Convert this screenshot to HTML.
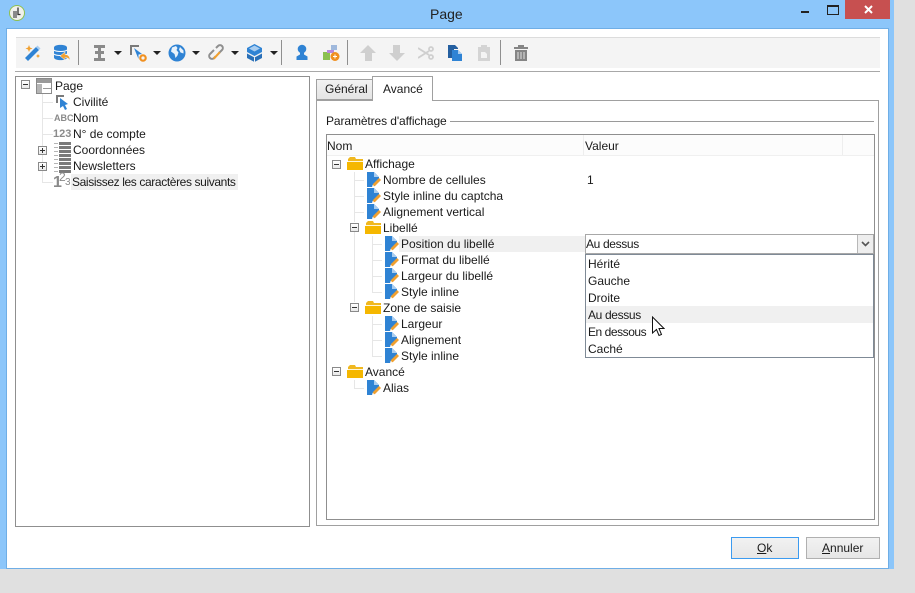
<!DOCTYPE html>
<html lang="fr"><head><meta charset="utf-8"><title>Page</title>
<style>
html,body{margin:0;padding:0}
body{width:915px;height:593px;overflow:hidden;position:relative;background:#e0e0e0;font:12px/16px "Liberation Sans",sans-serif;color:#1a1a1a}
div,span.t,svg.a{position:absolute}
.t{position:absolute;white-space:nowrap;height:16px;line-height:16px}
.box{box-sizing:border-box;background:#fff}
.pm{position:absolute;width:9px;height:9px;box-sizing:border-box;border:1px solid #8a8a8a;background:linear-gradient(#fff,#e8e8e8)}
.pm:before{content:"";position:absolute;left:1px;top:3px;width:5px;height:1px;background:#333}
.pm.p:after{content:"";position:absolute;left:3px;top:1px;width:1px;height:5px;background:#333}
.h{background:#e6e6e6;height:1px}
.v{background:#e6e6e6;width:1px}
.sep{width:1px;height:25px;top:40px;background:#8f8f8f}
.tri{width:0;height:0;border-left:4px solid transparent;border-right:4px solid transparent;border-top:4px solid #222;top:51px}
u{text-decoration:underline}
</style></head><body>
<svg width="0" height="0" style="position:absolute"><defs>
<symbol id="doc" viewBox="0 0 16 16"><path d="M1 0h7l5 5v3l-7 7H1z" fill="#2f83d4"/><path d="M8 0l5 5H8z" fill="#a9cdf0"/><path d="M6 15l1-3 6-6 2 2-6 6z" fill="#f0a030"/><path d="M6 15l.7-2.300 1.600 1.600z" fill="#fff"/></symbol>
<symbol id="fold" viewBox="0 0 16 14"><path d="M3 0h5l1 2h7v2H1V2z" fill="#f0b820"/><path d="M1 4h15v1H1z" fill="#fff6d8"/><path d="M0 5h16v8H0z" fill="#f5b700"/></symbol>
<symbol id="list" viewBox="0 0 17 18"><g fill="#7a7a7a"><rect x="5" y="1" width="12" height="3"/><rect x="5" y="5" width="12" height="3"/><rect x="5" y="9" width="12" height="3"/><rect x="5" y="13" width="12" height="3"/></g><g fill="#b5b5b5"><rect x="0" y="2" width="4" height="1"/><rect x="0" y="6" width="4" height="1"/><rect x="0" y="10" width="4" height="1"/><rect x="0" y="14" width="4" height="1"/></g></symbol>
</defs></svg>

<!-- window -->
<div style="left:0;top:0;width:894px;height:569px;background:#8cc6fa"></div>
<div style="left:6px;top:28px;width:883px;height:541px;box-sizing:border-box;border:1px solid #6faee6;background:#fff"></div>

<!-- title -->
<svg class="a" style="left:8px;top:4px" width="18" height="18" viewBox="0 0 18 18"><circle cx="9" cy="9" r="7.500" fill="#f0f0ec" stroke="#8fc050"/><path d="M5 7h4v7H5z" fill="#8a8a8a"/><path d="M10 3.500v7h2.500" fill="none" stroke="#333" stroke-width="1.300"/></svg>
<span class="t" style="left:430px;top:6px;font-size:14px;color:#222">Page</span>
<div style="left:801px;top:11px;width:8px;height:2px;background:#222"></div>
<div style="left:827px;top:5px;width:10px;height:7px;border:1px solid #222;border-top-width:2px;box-sizing:content-box"></div>
<div style="left:845px;top:0;width:45px;height:19px;background:#c75050"></div>
<svg class="a" style="left:864px;top:5px" width="9" height="9" viewBox="0 0 9 9"><path d="M1 1l7 7M8 1L1 8" stroke="#fff" stroke-width="2"/></svg>

<!-- toolbar -->
<div style="left:16px;top:37px;width:864px;height:30px;background:#f4f4f4;border-top:1px solid #dcdcdc"></div>
<div style="left:15px;top:71px;width:865px;height:1px;background:#a8a8a8"></div>

<svg class="a" style="left:24px;top:44px" width="18" height="18" viewBox="0 0 18 18"><path d="M1 14L12 3l3 3L4 17z" fill="#2f83d4"/><path d="M12 3l1.500-1.500 3 3L15 6z" fill="#a9cdf0"/><path d="M5 1l1 2.500 2.500 1-2.500 1L5 8 4 5.500l-2.500-1 2.500-1zM14 10l.7 1.300 1.300.7-1.300.7-.7 1.300-.7-1.300-1.300-.7 1.300-.7z" fill="#f0a030"/></svg>
<svg class="a" style="left:53px;top:44px" width="18" height="18" viewBox="0 0 18 18"><path d="M1 3.500c0-3.500 13-3.500 13 0v10c0 3.500-13 3.500-13 0z" fill="#2f83d4"/><path d="M1 6c2 2 11 2 13 0M1 10c2 2 11 2 13 0" stroke="#fff" fill="none"/><path d="M7 12l5-4v2.500c3 0 5 2 5 6-1-2-3-3-5-3V16z" fill="#f0a030" stroke="#f4f4f4" stroke-width=".5"/></svg>
<div class="sep" style="left:78px"></div>
<svg class="a" style="left:93px;top:45px" width="13" height="16" viewBox="0 0 13 16"><path d="M1 0h11v3H8v3h3v3H8v4h4v3H1v-3h4V9H2V6h3V3H1z" fill="#8a8a8a"/></svg>
<div class="tri" style="left:114px"></div>
<svg class="a" style="left:130px;top:44px" width="17" height="19" viewBox="0 0 17 19"><path d="M0 1h9v2H2v8H0z" fill="#7a7a7a"/><path d="M4 4l8 6-3.500.5V15z" fill="#2f83d4"/><circle cx="13" cy="14" r="2.700" fill="none" stroke="#f09020" stroke-width="2.200"/></svg>
<div class="tri" style="left:153px"></div>
<svg class="a" style="left:168px;top:44px" width="18" height="18" viewBox="0 0 18 18"><circle cx="9" cy="9" r="8.500" fill="#2f83d4"/><path d="M4 3.500l4-1.500 1.500 2-1 2 2 2.500-1 3-2 2.500-1-4-3.500-2.500zM12 3l3.500 3.500v3l-3-1-1.500-3z" fill="#e8f2fb"/></svg>
<div class="tri" style="left:192px"></div>
<svg class="a" style="left:207px;top:44px" width="18" height="18" viewBox="0 0 18 18"><g fill="none" stroke="#8f8f8f" stroke-width="2"><path d="M7 6L3 10a2.800 2.800 0 0 0 4 4l1.500-1.500"/><path d="M9 4l2-2a2.800 2.800 0 0 1 4 4l-3 3"/></g><path d="M6 14l6-6.500 1.500 1.500L7.500 15.500z" fill="#f0a030"/></svg>
<div class="tri" style="left:231px"></div>
<svg class="a" style="left:246px;top:44px" width="17" height="18" viewBox="0 0 17 18"><path d="M8.500 0L16 4v4l-7.500 4L1 8V4z" fill="#2f83d4"/><path d="M3 4.500l5.500-3 5.500 3-5.500 3z" fill="#a9cdf0"/><path d="M1 9.500l7.500 4 7.500-4V14l-7.500 4L1 14z" fill="#2a70b8"/><path d="M8 13.500h1V18H8z" fill="#f4f4f4"/></svg>
<div class="tri" style="left:270px"></div>
<div class="sep" style="left:281px"></div>
<svg class="a" style="left:295px;top:44px" width="14" height="17" viewBox="0 0 14 17"><circle cx="7" cy="5" r="4.300" fill="#2f83d4"/><path d="M5 8h4v2.500l3.500 2V16h-11v-3.500l3.500-2z" fill="#2f83d4"/></svg>
<svg class="a" style="left:322px;top:44px" width="18" height="18" viewBox="0 0 18 18"><rect x="1" y="8" width="7" height="8" fill="#8cc050"/><rect x="9" y="1" width="6" height="5" fill="#9fb8dc"/><path d="M5 6h7v3H5z" fill="#b888dc"/><circle cx="13" cy="12.500" r="4.500" fill="#f09020"/><path d="M11 12.500h4M13 10.500v4" stroke="#fff"/></svg>
<div class="sep" style="left:347px"></div>
<svg class="a" style="left:360px;top:45px" width="16" height="16" viewBox="0 0 16 16"><path d="M8 0l8 8h-4v8H5V8H0z" fill="#cfcfcf"/></svg>
<svg class="a" style="left:389px;top:45px" width="16" height="16" viewBox="0 0 16 16"><path d="M8 16L0 8h4V0h7v8h5z" fill="#cfcfcf"/></svg>
<svg class="a" style="left:418px;top:45px" width="16" height="16" viewBox="0 0 16 16"><g fill="none" stroke="#cfcfcf" stroke-width="1.800"><circle cx="13" cy="4" r="2"/><circle cx="13" cy="12" r="2"/><path d="M0 3l11 7M0 13l11-7"/></g></svg>
<svg class="a" style="left:447px;top:44px" width="16" height="18" viewBox="0 0 16 18"><rect x="1" y="1" width="6" height="13" fill="#245fa0"/><path d="M6 1h2l3 3v1H6z" fill="#245fa0"/><path d="M5 6h6l4 4v7H5z" fill="#2f83d4"/><path d="M11 6l4 4h-4z" fill="#a9cdf0"/></svg>
<svg class="a" style="left:477px;top:45px" width="14" height="16" viewBox="0 0 14 16"><path d="M1 2h3V0h6v2h3v14H1z" fill="#d4d4d4"/><path d="M4 7h4l2 2v4H4z" fill="#f4f4f4"/></svg>
<div class="sep" style="left:500px"></div>
<svg class="a" style="left:514px;top:45px" width="14" height="16" viewBox="0 0 14 16"><path d="M0 2h4V0h6v2h4v2H0zM1 5h12v11H1z" fill="#858585"/><path d="M4 7v7M7 7v7M10 7v7" stroke="#e4e4e4"/></svg>

<!-- left tree -->
<div class="box" style="left:15px;top:76px;width:295px;height:451px;border:1px solid #8f8f8f"></div>
<div class="v" style="left:42px;top:94px;height:88px"></div>
<div class="h" style="left:42px;top:102px;width:11px"></div>
<div class="h" style="left:42px;top:118px;width:11px"></div>
<div class="h" style="left:42px;top:134px;width:11px"></div>
<div class="h" style="left:42px;top:182px;width:11px"></div>
<div class="pm" style="left:21px;top:80px"></div>
<div class="pm p" style="left:38px;top:146px"></div>
<div class="pm p" style="left:38px;top:162px"></div>
<svg class="a" style="left:36px;top:78px" width="16" height="16" viewBox="0 0 16 16"><rect x=".5" y=".5" width="15" height="15" fill="#fff" stroke="#8a8a8a"/><rect x="1" y="1" width="14" height="4" fill="#9a9a9a"/><rect x="1" y="6" width="5" height="9" fill="#b5b5b5"/><rect x="7" y="10" width="8" height="1" fill="#9a9a9a"/></svg>
<span class="t" style="left:55px;top:78px">Page</span>
<svg class="a" style="left:55px;top:94px" width="15" height="16" viewBox="0 0 15 16"><path d="M1 1h8v2H3v6H1z" fill="#7a7a7a"/><path d="M5 4l8 6-3 1 2 4-2 1-2-4-3 2z" fill="#2f83d4"/></svg>
<span class="t" style="left:73px;top:94px">Civilité</span>
<span class="t" style="left:54px;top:110px;font-size:9px;font-weight:bold;color:#8a8a8a">ABC</span>
<span class="t" style="left:73px;top:110px">Nom</span>
<span class="t" style="left:53px;top:126px;font-size:11px;font-weight:bold;color:#8a8a8a">123</span>
<span class="t" style="left:73px;top:126px">N° de compte</span>
<svg class="a" style="left:54px;top:141px" width="17" height="18"><use href="#list"/></svg>
<span class="t" style="left:73px;top:142px">Coordonnées</span>
<svg class="a" style="left:54px;top:157px" width="17" height="18"><use href="#list"/></svg>
<span class="t" style="left:73px;top:158px">Newsletters</span>
<div style="left:71px;top:174px;width:167px;height:16px;background:#f0f0f0"></div>
<span class="t" style="left:53px;top:175px;font-size:16px;font-weight:bold;color:#8a8a8a">1</span>
<span class="t" style="left:59px;top:169px;font-size:12px;color:#8a8a8a">2</span>
<span class="t" style="left:65px;top:175px;font-size:10px;color:#8a8a8a">3</span>
<span class="t" style="left:72px;top:174px;letter-spacing:-.38px">Saisissez les caractères suivants</span>

<!-- tabs -->
<div class="box" style="left:316px;top:100px;width:563px;height:426px;border:1px solid #a0a0a0"></div>
<div style="left:316px;top:79px;width:56px;height:21px;box-sizing:border-box;border:1px solid #a0a0a0;border-right:0;background:linear-gradient(#f2f2f2,#e4e4e4)"></div>
<span class="t" style="left:325px;top:81px">Général</span>
<div style="left:372px;top:76px;width:61px;height:25px;box-sizing:border-box;border:1px solid #a0a0a0;border-bottom:0;background:#fff"></div>
<span class="t" style="left:383px;top:81px">Avancé</span>

<span class="t" style="left:326px;top:113px;letter-spacing:-.1px">Paramètres d'affichage</span>
<div style="left:450px;top:121px;width:424px;height:1px;background:#9a9a9a"></div>

<!-- grid -->
<div class="box" style="left:326px;top:134px;width:549px;height:386px;border:1px solid #8f8f8f"></div>
<div style="left:327px;top:135px;width:547px;height:20px;background:#fcfcfc;border-bottom:1px solid #f0f0f0"></div>
<div style="left:583px;top:135px;width:1px;height:20px;background:#eee"></div>
<div style="left:842px;top:135px;width:1px;height:20px;background:#eee"></div>
<span class="t" style="left:327px;top:138px">Nom</span>
<span class="t" style="left:585px;top:138px">Valeur</span>

<!-- grid tree lines -->
<div class="v" style="left:354px;top:172px;height:50px"></div>
<div class="v" style="left:354px;top:232px;height:70px"></div>
<div class="v" style="left:354px;top:380px;height:8px"></div>
<div class="v" style="left:372px;top:236px;height:56px"></div>
<div class="v" style="left:372px;top:316px;height:40px"></div>
<div class="h" style="left:354px;top:180px;width:10px"></div>
<div class="h" style="left:354px;top:196px;width:10px"></div>
<div class="h" style="left:354px;top:212px;width:10px"></div>
<div class="h" style="left:372px;top:244px;width:10px"></div>
<div class="h" style="left:372px;top:260px;width:10px"></div>
<div class="h" style="left:372px;top:276px;width:10px"></div>
<div class="h" style="left:372px;top:292px;width:10px"></div>
<div class="h" style="left:372px;top:324px;width:10px"></div>
<div class="h" style="left:372px;top:340px;width:10px"></div>
<div class="h" style="left:372px;top:356px;width:10px"></div>
<div class="h" style="left:354px;top:388px;width:10px"></div>

<div class="pm" style="left:332px;top:160px"></div>
<div class="pm" style="left:350px;top:223px"></div>
<div class="pm" style="left:350px;top:303px"></div>
<div class="pm" style="left:332px;top:367px"></div>

<svg class="a" style="left:347px;top:157px" width="16" height="14"><use href="#fold"/></svg>
<span class="t" style="left:365px;top:156px">Affichage</span>
<svg class="a" style="left:366px;top:172px" width="16" height="16"><use href="#doc"/></svg>
<span class="t" style="left:383px;top:172px">Nombre de cellules</span>
<span class="t" style="left:587px;top:172px">1</span>
<svg class="a" style="left:366px;top:188px" width="16" height="16"><use href="#doc"/></svg>
<span class="t" style="left:383px;top:188px">Style inline du captcha</span>
<svg class="a" style="left:366px;top:204px" width="16" height="16"><use href="#doc"/></svg>
<span class="t" style="left:383px;top:204px">Alignement vertical</span>
<svg class="a" style="left:365px;top:221px" width="16" height="14"><use href="#fold"/></svg>
<span class="t" style="left:383px;top:220px">Libellé</span>

<div style="left:399px;top:236px;width:186px;height:16px;background:#f0f0f0"></div>
<svg class="a" style="left:384px;top:236px" width="16" height="16"><use href="#doc"/></svg>
<span class="t" style="left:401px;top:236px">Position du libellé</span>
<svg class="a" style="left:384px;top:252px" width="16" height="16"><use href="#doc"/></svg>
<span class="t" style="left:401px;top:252px">Format du libellé</span>
<svg class="a" style="left:384px;top:268px" width="16" height="16"><use href="#doc"/></svg>
<span class="t" style="left:401px;top:268px">Largeur du libellé</span>
<svg class="a" style="left:384px;top:284px" width="16" height="16"><use href="#doc"/></svg>
<span class="t" style="left:401px;top:284px">Style inline</span>
<svg class="a" style="left:365px;top:301px" width="16" height="14"><use href="#fold"/></svg>
<span class="t" style="left:383px;top:300px">Zone de saisie</span>
<svg class="a" style="left:384px;top:316px" width="16" height="16"><use href="#doc"/></svg>
<span class="t" style="left:401px;top:316px">Largeur</span>
<svg class="a" style="left:384px;top:332px" width="16" height="16"><use href="#doc"/></svg>
<span class="t" style="left:401px;top:332px">Alignement</span>
<svg class="a" style="left:384px;top:348px" width="16" height="16"><use href="#doc"/></svg>
<span class="t" style="left:401px;top:348px">Style inline</span>
<svg class="a" style="left:347px;top:365px" width="16" height="14"><use href="#fold"/></svg>
<span class="t" style="left:365px;top:364px">Avancé</span>
<svg class="a" style="left:366px;top:380px" width="16" height="16"><use href="#doc"/></svg>
<span class="t" style="left:383px;top:380px">Alias</span>

<!-- combo -->
<div class="box" style="left:585px;top:234px;width:289px;height:20px;border:1px solid #a8a8a8"></div>
<span class="t" style="left:586px;top:236px;letter-spacing:-.35px">Au dessus</span>
<div style="left:857px;top:235px;width:16px;height:18px;background:#eee;border-left:1px solid #b8b8b8;box-sizing:border-box"></div>
<svg class="a" style="left:861px;top:241px" width="9" height="6" viewBox="0 0 9 6"><path d="M1 1l3.500 3.500L8 1" fill="none" stroke="#555" stroke-width="1.600"/></svg>
<div class="box" style="left:585px;top:254px;width:289px;height:104px;border:1px solid #7f8a96"></div>
<div style="left:586px;top:306px;width:287px;height:17px;background:#f0f0f0"></div>
<span class="t" style="left:588px;top:256px">Hérité</span>
<span class="t" style="left:588px;top:273px">Gauche</span>
<span class="t" style="left:588px;top:290px">Droite</span>
<span class="t" style="left:588px;top:307px;letter-spacing:-.35px">Au dessus</span>
<span class="t" style="left:588px;top:324px;letter-spacing:-.45px">En dessous</span>
<span class="t" style="left:588px;top:341px">Caché</span>
<svg class="a" style="left:651px;top:316px" width="14" height="22" viewBox="0 0 14 22"><path d="M1.500 1v16l4-3.500 2.500 6 2.500-1-2.500-6h5z" fill="#fff" stroke="#111"/></svg>

<!-- buttons -->
<div style="left:731px;top:537px;width:68px;height:22px;box-sizing:border-box;border:1px solid #3c9bf0;background:linear-gradient(#f2f2f2,#e6e6e6)"></div>
<span class="t" style="left:757px;top:540px"><u>O</u>k</span>
<div style="left:806px;top:537px;width:74px;height:22px;box-sizing:border-box;border:1px solid #b0b0b0;background:linear-gradient(#f2f2f2,#e6e6e6)"></div>
<span class="t" style="left:822px;top:540px"><u>A</u>nnuler</span>
</body></html>
